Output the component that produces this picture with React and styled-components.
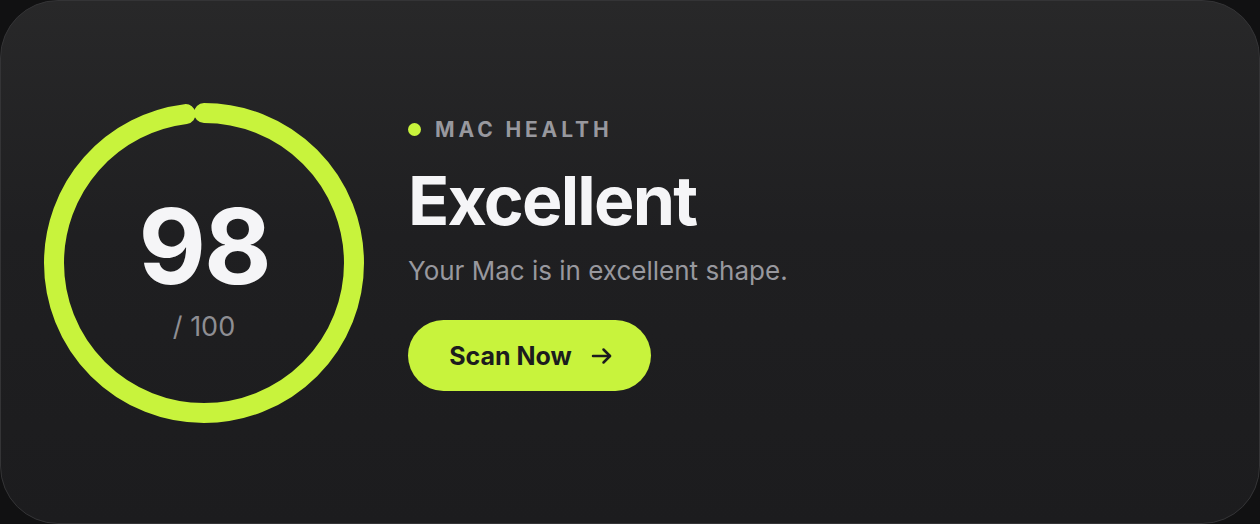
import React from "react";
import styled, { createGlobalStyle } from "styled-components";

const Global = createGlobalStyle`
  html, body { margin: 0; padding: 0; background: #111112; }
  body { font-family: Inter, "Noto Sans", sans-serif; -webkit-font-smoothing: antialiased; }
  * { box-sizing: border-box; }
`;

const Card = styled.div`
  width: 1260px;
  height: 524px;
  border-radius: 58px;
  border: 1px solid #343436;
  background: linear-gradient(180deg, #282829 0%, #1f1f21 45%, #1c1c1e 100%);
  display: flex;
  align-items: center;
  padding: 0 0 0 43px;
  gap: 44px;
`;

const RingWrap = styled.div`
  position: relative;
  width: 320px;
  height: 320px;
  flex: none;
  margin-top: 1px;
`;

const RingSvg = styled.svg`
  position: absolute;
  inset: 0;
`;

const RingCenter = styled.div`
  position: absolute;
  inset: 0;
  display: flex;
  flex-direction: column;
  align-items: center;
  justify-content: center;
`;

const Score = styled.div`
  font-size: 104px;
  font-weight: 700;
  color: #f5f5f7;
  line-height: 1;
  letter-spacing: -2px;
  margin-top: 8px;
`;

const Total = styled.div`
  font-size: 27px;
  color: #8e8e93;
  line-height: 1;
  margin-top: 15px;
`;

const Content = styled.div`
  display: flex;
  flex-direction: column;
  align-items: flex-start;
  margin-top: -14px;
`;

const Label = styled.div`
  display: flex;
  align-items: center;
  gap: 14px;
  font-size: 21px;
  font-weight: 700;
  letter-spacing: 0.185em;
  color: #98989e;
  line-height: 1;
`;

const Dot = styled.span`
  width: 13px;
  height: 13px;
  border-radius: 50%;
  background: #c8f33c;
`;

const Title = styled.h1`
  margin: 26px 0 0;
  font-size: 68px;
  font-weight: 700;
  color: #f5f5f7;
  line-height: 1;
  letter-spacing: -1.8px;
`;

const Subtitle = styled.p`
  margin: 21px 0 0;
  font-size: 26px;
  color: #98989e;
  line-height: 1.2;
`;

const Button = styled.button`
  margin-top: 34px;
  width: 243px;
  height: 71px;
  border: none;
  border-radius: 36px;
  background: #c8f33c;
  color: #1c1c1e;
  font-family: inherit;
  font-size: 25px;
  font-weight: 700;
  display: flex;
  align-items: center;
  justify-content: center;
  gap: 18px;
  padding: 0 0 0 4px;
  cursor: pointer;
`;

const R = 150;
const C = 2 * Math.PI * R;

export default function App() {
  const pct = 0.98;
  return (
    <>
      <Global />
      <Card>
        <RingWrap>
          <RingSvg width="320" height="320" viewBox="0 0 320 320">
            <circle
              cx="160"
              cy="160"
              r={R}
              fill="none"
              stroke="#c8f33c"
              strokeWidth="20"
              strokeLinecap="round"
              strokeDasharray={`${C * pct} ${C}`}
              transform="rotate(-90 160 160)"
            />
          </RingSvg>
          <RingCenter>
            <Score>98</Score>
            <Total>/ 100</Total>
          </RingCenter>
        </RingWrap>
        <Content>
          <Label>
            <Dot />
            MAC HEALTH
          </Label>
          <Title>Excellent</Title>
          <Subtitle>Your Mac is in excellent shape.</Subtitle>
          <Button>
            Scan Now
            <svg width="24" height="24" viewBox="0 0 24 24" fill="none" stroke="#1c1c1e" strokeWidth="2.5" strokeLinecap="round" strokeLinejoin="round">
              <path d="M3 12h17" />
              <path d="M13.5 5.5l6.5 6.5-6.5 6.5" />
            </svg>
          </Button>
        </Content>
      </Card>
    </>
  );
}
